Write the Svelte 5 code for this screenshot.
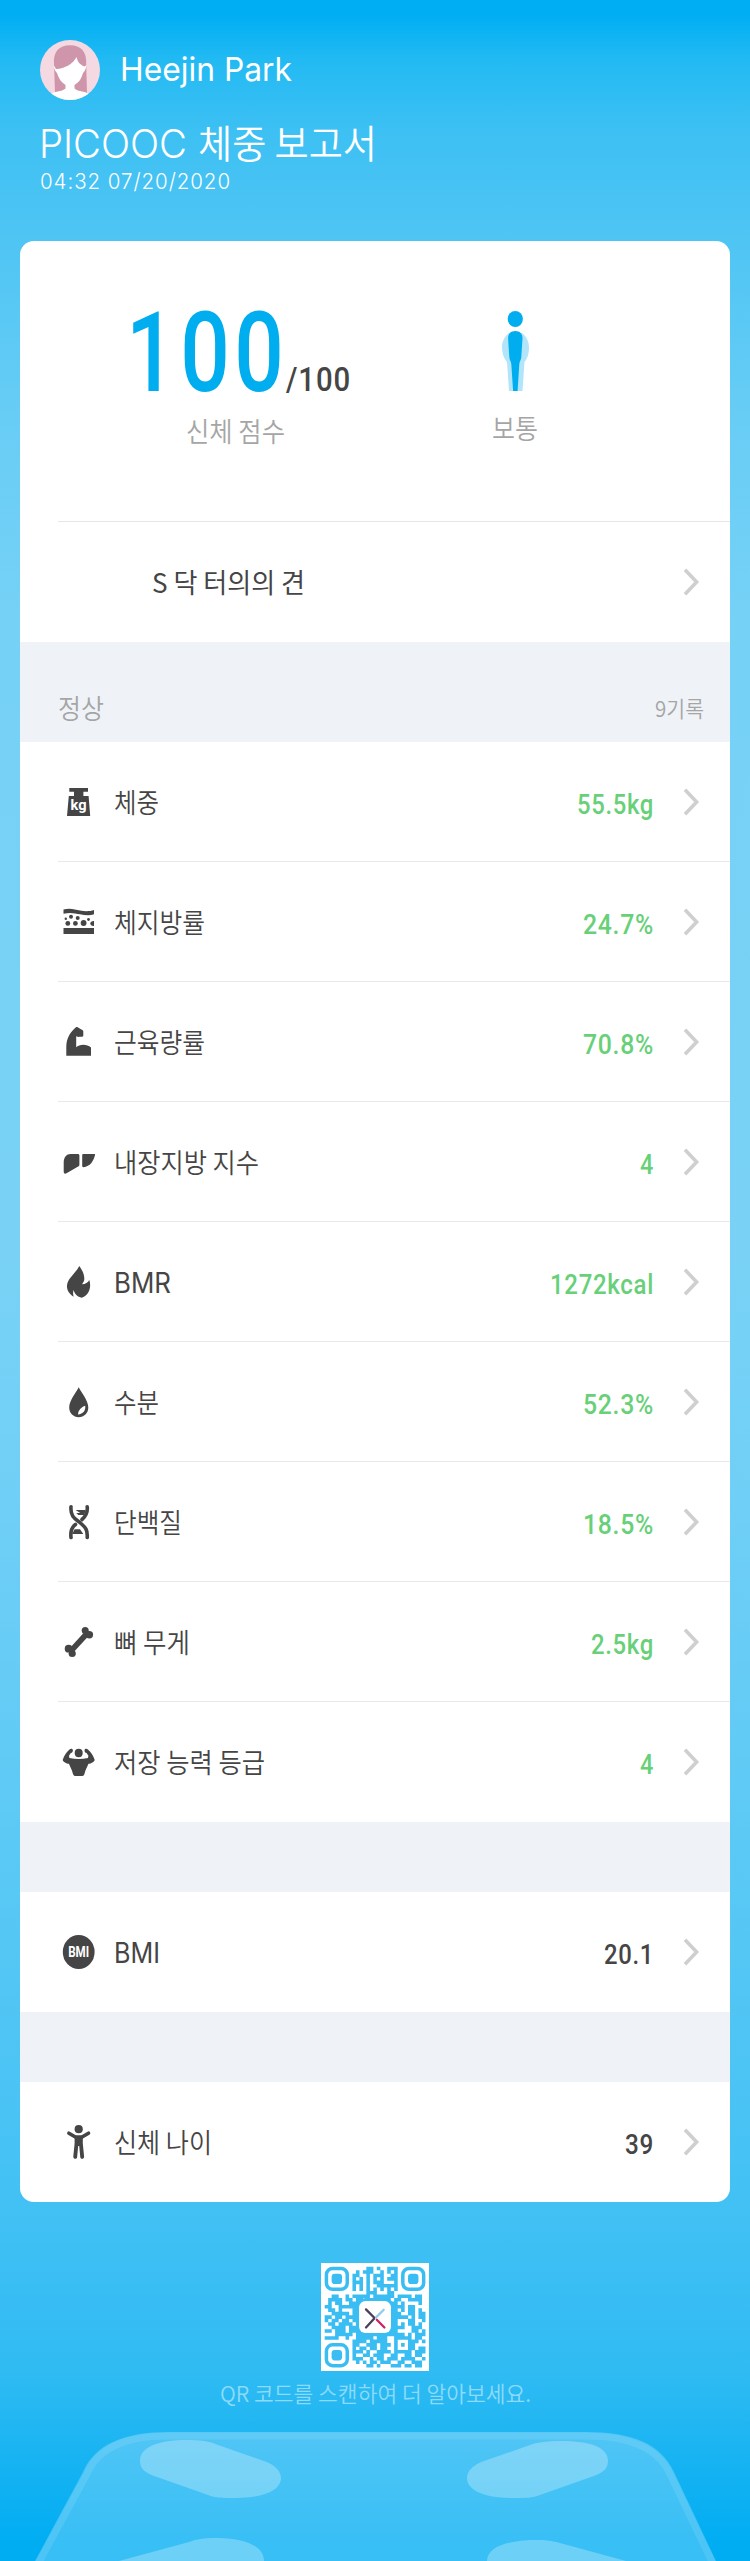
<script>
  const metrics = [
    { icon: 'weight', label: '체중', lw: 45, value: '55.5kg', vw: 77 },
    { icon: 'fat', label: '체지방률', lw: 91, value: '24.7%', vw: 71 },
    { icon: 'muscle', label: '근육량률', lw: 91, value: '70.8%', vw: 71 },
    { icon: 'liver', label: '내장지방 지수', lw: 145, value: '4', vw: 14 },
    { icon: 'flame', label: 'BMR', lw: 57, latin: true, value: '1272kcal', vw: 104 },
    { icon: 'drop', label: '수분', lw: 45, value: '52.3%', vw: 71 },
    { icon: 'dna', label: '단백질', lw: 68, value: '18.5%', vw: 71 },
    { icon: 'bone', label: '뼈 무게', lw: 76, value: '2.5kg', vw: 63 },
    { icon: 'body', label: '저장 능력 등급', lw: 151, value: '4', vw: 14 }
  ];
  const bmi = { icon: 'bmi', label: 'BMI', lw: 46, latin: true, value: '20.1', vw: 50, dark: true };
  const age = { icon: 'age', label: '신체 나이', lw: 98, value: '39', vw: 29, dark: true };

  const code = [
    '............##.#..###........',
    '.........#.###..#.#.#........',
    '........##..#.###..##........',
    '........#.#.#.#.#.###........',
    '........###.#.###...#........',
    '........#.#.#..######........',
    '........#.#.#.#.#.#.#........',
    '............###...##.........',
    '..##..#.#####.######.####.##.',
    '.####.##.##.#######.##..####.',
    '.#.##..###.........##.#....#.',
    '##..######.........####.##...',
    '.##.#...##.........##.#.##.#.',
    '..#####.##.........###..##.##',
    '##.##.###..........#####.#.##',
    '#.##.##.##.........##...##..#',
    '.##.####.#.........##.#.##.#.',
    '..####.###.........####..###.',
    '##.###.####.......###....##.#',
    '...#####.#####.########.#.###',
    '####..#..#####.###..#####.##.',
    '........####.#####..#...###.#',
    '........##..###.###.#.#.##...',
    '........#.##.##.##..#...##.##',
    '........###.#..####.#####.###',
    '........#..##.###..##..##.##.',
    '........###..#.##.###.####..#',
    '.........#.#.##.###..##..###.',
    '............##.#...###.##.##.'
  ];
  const modules = code
    .map((row, y) => [...row].map((c, x) => (c === '#' ? `M${x} ${y}h1.03v1.03h-1.03z` : '')).join(''))
    .join('');
</script>

{#snippet fit(text, width, size, weight, family, spacing)}
  <svg class="fit {family}" {width} height={size} role="img" aria-label={text}>
    <text
      y={size * 0.88}
      font-size={size}
      font-weight={weight}
      letter-spacing={spacing ?? 0}
      textLength={width}
      lengthAdjust="spacingAndGlyphs">{text}</text>
  </svg>
{/snippet}

{#snippet chevron()}
  <svg class="chevron" width="17" height="28" viewBox="0 0 17 28">
    <path d="M2 1.8L13.6 14 2 26.2" />
  </svg>
{/snippet}

{#snippet glyph(name)}
  <svg class="glyph" width="34" height="36" viewBox="0 0 34 36">
    {#if name === 'weight'}
      <path d="M7.3 4H26v3.8h-4.6V12h5.2L28.2 32H5L6.8 12H12V7.8H7.3z" />
      <text class="mark" x="8.5" y="26.300" font-size="15.500" textLength="16" lengthAdjust="spacingAndGlyphs">kg</text>
    {:else if name === 'fat'}
      <path d="M1.5 5.5C8 3.500 13 5.500 18 6.500S28 7.500 32 6v4.300c-4 1.500-9 1-14 0S8 8 1.500 9.800zM1.500 24H32v6H1.500z" />
      <circle cx="3.800" cy="14.700" r="1.200" /><circle cx="9" cy="12.800" r="2" />
      <circle cx="15.700" cy="14" r="2" /><circle cx="26.500" cy="15.500" r="1.400" />
      <circle cx="5.800" cy="19.400" r="2.400" /><circle cx="13.400" cy="19.400" r="2.400" />
      <circle cx="21.600" cy="19" r="2.900" /><path d="M32 17v5c-2 .3-3.700-1-3.700-2.500S30 16.800 32 17z" />
    {:else if name === 'muscle'}
      <path d="M4.300 31.800V22C4.600 14 8.500 7.500 14 3.200c.7-.3 1.300-.1 2 .3l4.300 2.500c.8.500 1 .8 1 1.600v4c0 .8-.4 1.100-1 1.100h-2.300c-.8 0-1 .3-1.600.2l-2.200-.7v11C17 20 25 19.500 29 23.500v8.300z" />
    {:else if name === 'liver'}
      <path d="M8.500 10h7.300c1 0 1.600.6 1.600 1.600v9c0 1-.3 1.600-1.200 2L4.500 29.300c-1.600.8-2.700.2-2.800-1.500V18C2 13 4.500 10 8.500 10zM21.500 10h11c.5 0 .7.3.6.8-1.500 6.500-5 11.700-11.600 12.400-.9 0-1.300-.4-1.300-1.200V11.300c0-.9.500-1.300 1.300-1.300z" />
    {:else if name === 'flame'}
      <path d="M17.300 2c3 4 5.200 8.800 5 13 0 2-1 3.700-2.300 5.300 3.500-.2 6-1.700 7.300-4.300C30 24.500 26 32 19.700 33.700 15.500 32.800 12.500 30 11.700 26c-.8 2-.8 4.500 0 6.700C7 30 4.700 26 5 21.500 5.500 14.500 13 10 17.300 2z" />
    {:else if name === 'drop'}
      <path d="M16.700 3.300C19.500 9 26.300 16.500 26.300 23.500c0 5.600-4.300 9.700-9.600 9.700s-9.500-4.100-9.500-9.700C7.200 16.500 14 9 16.700 3.300z" />
      <path class="hole" d="M23.200 21.800c.7 4.500-2.200 8.500-7.200 8.600 0-3.800 3.500-7.500 7.200-8.600z" />
    {:else if name === 'dna'}
      <g class="strand">
        <path d="M25.200 2.700C26 10 23 13 20 15.500M13.500 20.500C10 23 8.300 27 9 33.500" />
        <path d="M9 2.700C8 14 15 15.500 19 19.500 23.500 23.500 25.800 26 25.200 33.500" />
      </g>
      <path d="M13.600 6h9.900l-1.200 5h-6l-2-2h4zM18 25.300l3.300 4.700H10.200l2.400-4.700z" />
    {:else if name === 'bone'}
      <path class="shaft" d="M9.500 26.300L25 9.500" />
      <circle cx="23.200" cy="6.500" r="3.500" /><circle cx="27.400" cy="10.700" r="3.700" />
      <circle cx="6.600" cy="24.700" r="3.900" /><circle cx="10.200" cy="29.500" r="3.600" />
    {:else if name === 'body'}
      <ellipse cx="16.700" cy="9" rx="4" ry="4.200" />
      <path d="M7.500 5.500c1-1 3-1 3.300.4.400 1.500-.6 2.800-2 3.100L7 11.700l.4 2.300c6 1.200 12.700 1.200 18.600 0l.4-2.300L24.600 9c-1.400-.3-2.400-1.600-2-3.100.3-1.400 2.300-1.400 3.300-.4 3.300 2.500 5.500 6.500 6.800 10.500-.6 2-3.600 3.700-6.200 3.800-1.500 4-3 5.500-3.700 9-.5 2-1 3.100-2.500 3.200h-7.200c-1.500-.1-2-1.200-2.500-3.200-.7-3.500-2.200-5-3.700-9C4.300 19.700 1.300 18 .7 16 2 12 4.200 8 7.500 5.500z" />
    {:else if name === 'bmi'}
      <ellipse cx="16.700" cy="18" rx="15.900" ry="17" />
      <text class="mark" x="6.200" y="23" font-size="14" textLength="21" lengthAdjust="spacingAndGlyphs">BMI</text>
    {:else}
      <circle cx="16.700" cy="5.200" r="4.100" />
      <path class="limb" d="M6.900 9.200l6.900 4h5.800l6.900-4" />
      <path d="M12.600 11.500h8.200v8l1.300 13c.1 2.800-3.300 3.100-3.800.8L17.200 22h-1l-1.100 11.300c-.5 2.300-3.900 2-3.800-.8l1.300-13z" />
    {/if}
  </svg>
{/snippet}

{#snippet metric(m)}
  <div class="row">
    {@render glyph(m.icon)}
    <div class="label">{@render fit(m.label, m.lw, m.latin ? 28 : 27, m.latin ? 400 : 350, m.latin ? 'latin' : 'ko')}</div>
    <div class="value" class:dark={m.dark}>{@render fit(m.value, m.vw, 28, 500, 'num', 0.8)}</div>
    {@render chevron()}
  </div>
{/snippet}

<main class="report">
  <header>
    <div class="user">
      <svg class="avatar" width="60" height="60" viewBox="0 0 60 60">
        <clipPath id="round"><circle cx="30" cy="30" r="30" /></clipPath>
        <g clip-path="url(#round)">
          <path fill="#f4d9e2" d="M0 0h60v60H0z" />
          <path fill="#cf95ab" d="M14 24C13 12 19 5.300 30 5.300S47 12 46.200 24l.8 29H15z" />
          <path fill="#fff" d="M16 29c9-.5 17-5 20.500-12 1 4.500 3 7.500 8 9.500l2-1.500c-.5 4-2 6.500-3.500 8-1.500 5.500-4 9.500-8.500 12v3.500C38 52 46 51 51 55v5H9v-5c5-4 13-3 16.500-6.500V45c-4-2.500-7-6.500-8.500-12-1.500-1.500-3-4-3.500-8z" />
        </g>
      </svg>
      <div class="name">{@render fit('Heejin Park', 172, 33, 400, 'latin')}</div>
    </div>
    <div class="title">
      {@render fit('PICOOC', 148, 39, 350, 'latin')}
      {@render fit('체중 보고서', 179, 39, 350, 'ko')}
    </div>
    <div class="date">{@render fit('04:32 07/20/2020', 191, 22, 350, 'latin', 1)}</div>
  </header>

  <section class="card">
    <div class="summary">
      <div class="score">
        <div class="points">
          <svg class="fit num" width="158" height="111" role="img" aria-label="100">
            <text y="97.700" font-size="111" font-weight="500" textLength="158" lengthAdjust="spacingAndGlyphs"><tspan letter-spacing="5.800">10</tspan><tspan>0</tspan></text>
          </svg>
          <div class="total">{@render fit('/100', 65, 34, 500, 'num', 1)}</div>
        </div>
        <div class="caption">{@render fit('신체 점수', 99, 27, 350, 'ko')}</div>
      </div>
      <div class="shape">
        <svg width="27" height="80" viewBox="0 0 27 80">
          <path fill="#b3e5fa" d="M7 22C2 26 0 31 0 36c0 6 1.500 11 5 15l2 29h13.500l2-29c3.500-4 4.500-9 4.500-15 0-5-2-10-7-14z" />
          <ellipse cx="13.300" cy="8" rx="7.600" ry="8" />
          <path d="M13.300 20c4.700 0 7.400 3 7.200 7.500L19.300 46c-.2 3-1.600 4-2 7l-1.700 27h-4.500L9.300 53c-.4-3-1.800-4-2-7L6.100 27.500C5.900 23 8.600 20 13.300 20z" />
        </svg>
        <div class="caption">{@render fit('보통', 46, 27, 350, 'ko')}</div>
      </div>
    </div>
    <div class="row doctor">
      <div class="label">{@render fit('S 닥 터의의 견', 153, 27, 400, 'ko')}</div>
      {@render chevron()}
    </div>
    <div class="band heading">
      {@render fit('정상', 46, 27, 350, 'ko')}
      {@render fit('9기록', 49, 22, 350, 'ko')}
    </div>
    {#each metrics as m}
      {@render metric(m)}
    {/each}
    <div class="band"></div>
    {@render metric(bmi)}
    <div class="band"></div>
    {@render metric(age)}
  </section>

  <footer>
    <svg class="qr" width="108" height="108" viewBox="-1.060 -1.060 31.100 31.100">
      <path fill="#fff" d="M-2-2h34v34H-2z" />
      <path d={modules} />
      {#each [[0, 0], [22, 0], [0, 22]] as [x, y]}
        <rect class="ring" x={x + 0.5} y={y + 0.5} width="6" height="6" rx="1.800" />
        <rect x={x + 2} y={y + 2} width="3" height="3" rx=".9" />
      {/each}
      <rect x="9" y="9" width="11" height="11" rx="2.800" />
      <rect fill="#fff" x="9.900" y="9.900" width="9.200" height="9.200" rx="1.800" />
      <g class="cross">
        <path stroke="#8fcdea" d="M17 12.400L14.800 14.600" />
        <path stroke="#4b4058" d="M11.900 12.300l2.300 2.300v.4l-2.300 2.500" />
        <path stroke="#d31e62" d="M15 15.300l2.200 2.200" />
      </g>
    </svg>
    <div class="hint">{@render fit('QR 코드를 스캔하여 더 알아보세요.', 311, 22, 350, 'ko')}</div>
    <svg class="scale" width="750" height="129" viewBox="0 0 750 129">
      <path fill-opacity=".22" d="M35 129L83 40C95 12 125 0 168 0H586C633 0 661 12 674 40L716 129z" />
      <path class="edge" d="M38 132L87 42C98 16 127 4 168 4H586C630 4 658 16 670 42L713 132" />
      <g fill-opacity=".27">
        <path d="M140 29C140 15 158 8 187 8c13 0 23 1 31 5l46 16c11 4 17 10 17 17 0 13-19 20-46 20-12 0-20 0-27-3l-51-18c-12-4-17-8-17-16z" />
        <path d="M608 29C608 15 590 9 561 9c-13 0-23 1-31 4l-46 16c-11 4-17 10-17 17 0 13 19 20 46 20 12 0 20 0 27-3l51-18c12-4 17-8 17-16z" />
        <path d="M119 129l70-19c8-3 15-4 26-4 30 0 49 8 49 23z" />
        <path d="M487 129c0-14 20-21 50-21 10 0 16 1 23 3l66 18z" />
      </g>
    </svg>
  </footer>
</main>

<style>
  :global(body) {
    margin: 0;
  }
  .report {
    display: flex;
    flex-direction: column;
    box-sizing: border-box;
    width: 750px;
    height: 2561px;
    overflow: hidden;
    padding: 0 20px;
    background: linear-gradient(#00aef3 0, #00aef3 14px, #22baf3 60px, #3dc0f3 130px, #4fc5f4 241px, #68cdf5 420px, #76d1f6 620px, #79d2f6 1250px, #70cff6 1500px, #58c8f5 1900px, #43c1f4 2200px, #30bbf3 2370px, #1ab4f2 2450px, #00adf2 2545px);
  }
  svg {
    display: block;
    flex: none;
  }
  .fit {
    overflow: visible;
    fill: currentColor;
    white-space: pre;
  }
  .latin {
    font-family: Inter, 'Liberation Sans', sans-serif;
  }
  .ko {
    font-family: 'Noto Sans CJK KR', sans-serif;
  }
  .num {
    font-family: Roboto, 'Liberation Sans', sans-serif;
  }
  header {
    box-sizing: border-box;
    height: 241px;
    padding: 40px 20px 0;
    color: #fff;
  }
  .user {
    display: flex;
    align-items: center;
    gap: 20px;
  }
  .name {
    padding-bottom: 3px;
  }
  .title {
    display: flex;
    gap: 11px;
    margin: 24px 0 0 -1px;
  }
  .date {
    margin-top: 7px;
  }
  .card {
    height: 1961px;
    border-radius: 14px;
    overflow: hidden;
    background: #fff;
  }
  .summary {
    display: flex;
    align-items: flex-start;
    box-sizing: border-box;
    height: 281px;
    padding: 52px 0 0 106px;
    color: #454545;
    background: linear-gradient(#e4e6e8, #e4e6e8) no-repeat 38px 100% / 100% 1px;
  }
  .score {
    display: flex;
    flex-direction: column;
    width: 258px;
  }
  .points {
    display: flex;
    align-items: flex-end;
    gap: 2px;
    color: #00aeef;
  }
  .total {
    margin-bottom: 9px;
    color: #454545;
  }
  .caption {
    color: #a5a5a5;
  }
  .score .caption {
    margin: 14px 0 0 60px;
  }
  .shape {
    display: flex;
    flex-direction: column;
    align-items: center;
    margin: 18px 0 0 108px;
    fill: #00aeef;
  }
  .shape .caption {
    margin-top: 24px;
  }
  .row {
    display: flex;
    align-items: center;
    height: 120px;
    padding: 0 30px 0 42px;
    color: #454545;
    background: linear-gradient(#e4eaed, #e4eaed) no-repeat 38px 100% / 100% 1px;
  }
  .row:has(+ .band),
  .row:last-child {
    background: none;
  }
  .doctor {
    padding-left: 132px;
  }
  .label {
    flex: 1;
  }
  .glyph {
    margin-right: 18px;
    fill: #454545;
  }
  .value {
    margin: 2px 29px 0 0;
    color: #68d078;
  }
  .value.dark {
    color: #454545;
  }
  .chevron {
    fill: none;
    stroke: #cfcfcf;
    stroke-width: 3.6;
  }
  .mark {
    fill: #fff;
    font-family: Roboto, sans-serif;
    font-weight: 700;
  }
  .glyph .hole {
    fill: #fff;
  }
  .strand,
  .limb,
  .shaft {
    fill: none;
    stroke: #454545;
    stroke-width: 3.6;
    stroke-linecap: round;
  }
  .shaft {
    stroke-width: 5.6;
  }
  .band {
    height: 70px;
    background: #eff3f8;
  }
  .heading {
    display: flex;
    justify-content: space-between;
    align-items: center;
    box-sizing: border-box;
    height: 100px;
    padding: 33px 26px 0 38px;
    color: #a5a5a5;
  }
  footer {
    display: flex;
    flex-direction: column;
    align-items: center;
    padding-top: 61px;
  }
  .qr {
    fill: #39bdf2;
  }
  .ring {
    fill: none;
    stroke: #39bdf2;
  }
  .cross {
    fill: none;
    stroke-width: 0.65;
    stroke-linecap: round;
  }
  .hint {
    margin-top: 12px;
    color: #8ddbf9;
  }
  .scale {
    margin-top: 27px;
    fill: #fff;
  }
  .edge {
    fill: none;
    stroke: #fff;
    stroke-opacity: 0.1;
    stroke-width: 7;
  }
</style>
